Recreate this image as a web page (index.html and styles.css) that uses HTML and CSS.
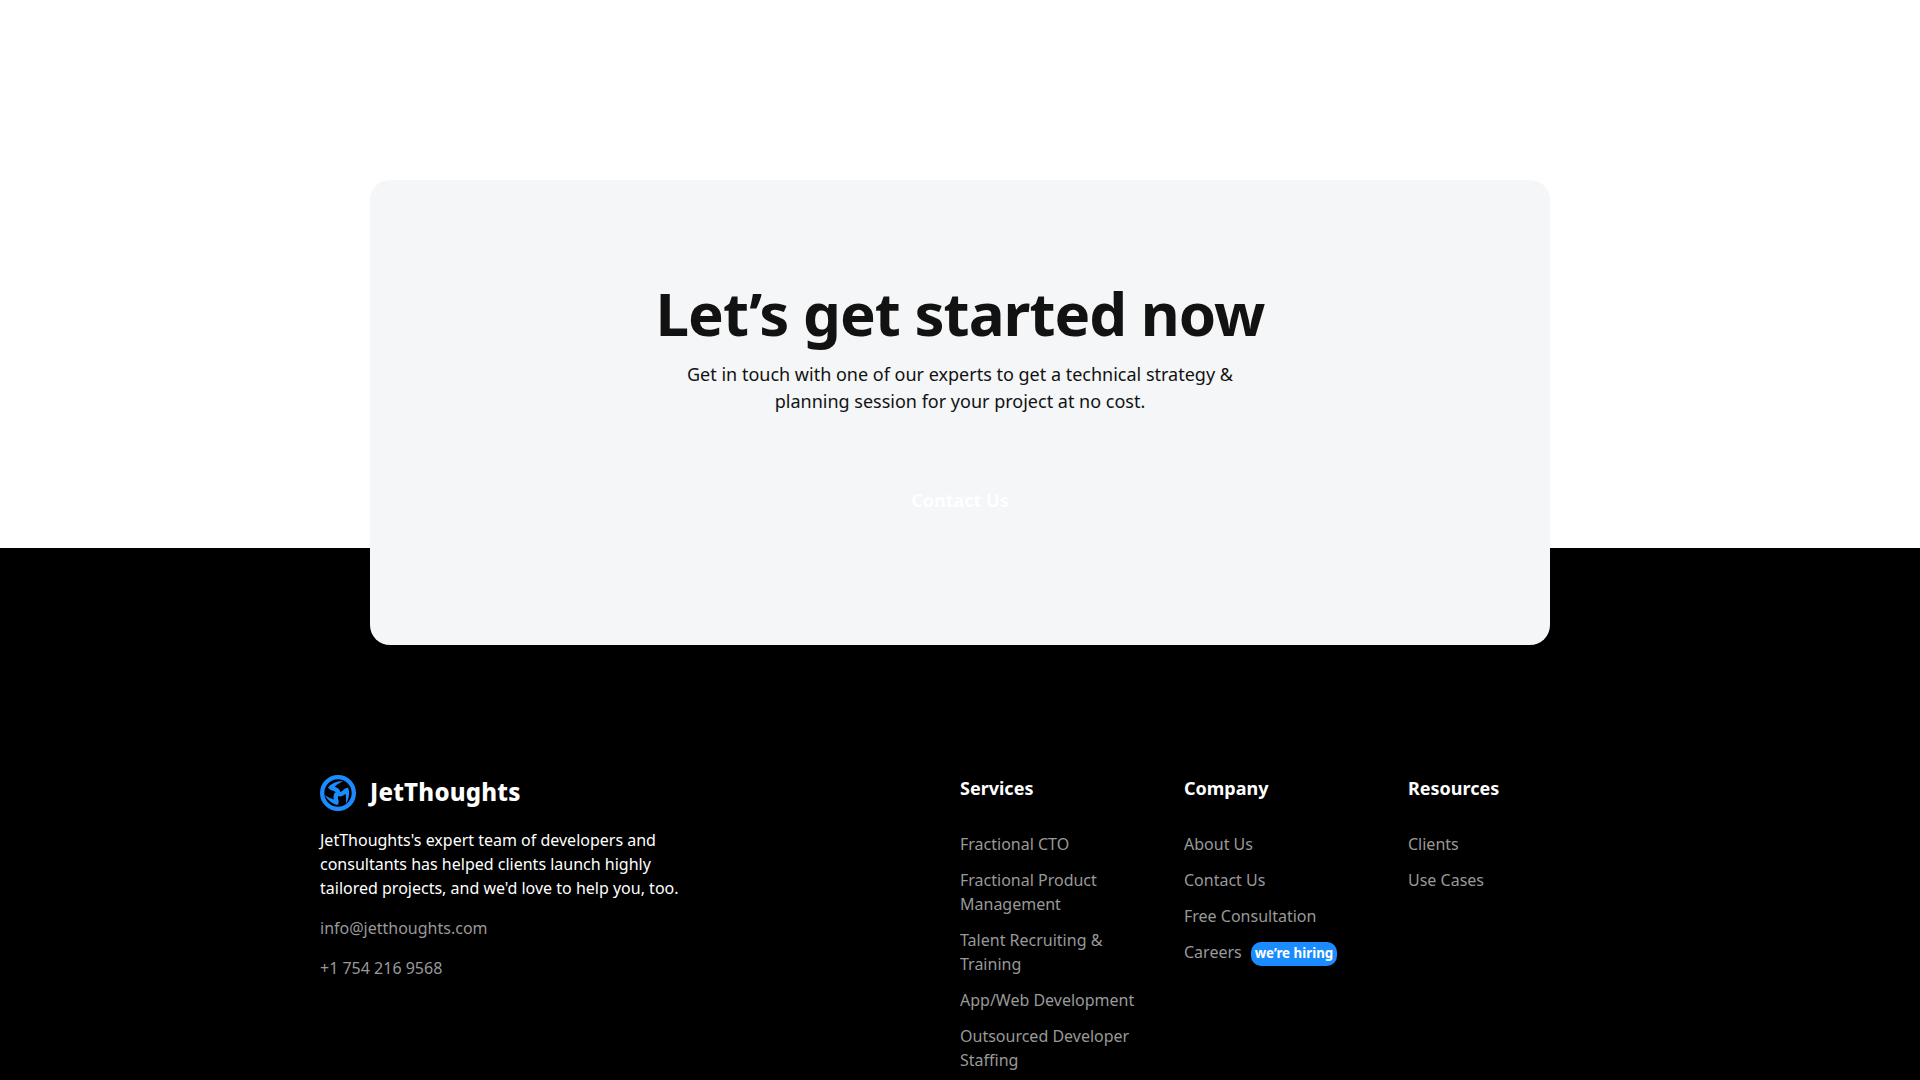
FILE: index.html
```html
<!DOCTYPE html>
<html lang="en">
<head>
<meta charset="utf-8">
<title>JetThoughts</title>
<link rel="stylesheet" href="styles.css">
</head>
<body>
<section class="cta">
  <div class="cta-card">
    <h2 class="cta-title">Let’s get started now</h2>
    <p class="cta-text">Get in touch with one of our experts to get a technical strategy &amp; planning session for your project at no cost.</p>
    <a class="cta-button">Contact Us</a>
  </div>
</section>
<footer class="footer">
  <div class="footer-inner">
    <div class="about">
      <div class="logo">
        <svg class="logo-mark" viewBox="0 0 108 108">
          <circle cx="54" cy="54" r="47.5" fill="none" stroke="#1a8cff" stroke-width="13"/>
          <g fill="#1a8cff">
            <path id="arm" d="M54 57 L48 58 C50 52 45 48 32 45 L24 38 C32 26 48 19 69 18 C60 24 51 28 44 35 C56 39 62 45 60 54 Z"/>
            <use href="#arm" transform="rotate(120 54 55)"/>
            <use href="#arm" transform="rotate(240 54 55)"/>
          </g>
        </svg>
        <span class="logo-name">JetThoughts</span>
      </div>
      <p class="about-text">JetThoughts's expert team of developers and consultants has helped clients launch highly tailored projects, and we'd love to help you, too.</p>
      <a class="contact">info@jetthoughts.com</a>
      <a class="contact">+1 754 216 9568</a>
    </div>
    <nav class="columns">
      <div class="column">
        <h3 class="column-title">Services</h3>
        <ul class="links">
          <li>Fractional CTO</li>
          <li>Fractional Product Management</li>
          <li>Talent Recruiting &amp; Training</li>
          <li>App/Web Development</li>
          <li>Outsourced Developer Staffing</li>
        </ul>
      </div>
      <div class="column">
        <h3 class="column-title">Company</h3>
        <ul class="links">
          <li>About Us</li>
          <li>Contact Us</li>
          <li>Free Consultation</li>
          <li class="careers">Careers <span class="badge">we’re hiring</span></li>
        </ul>
      </div>
      <div class="column">
        <h3 class="column-title">Resources</h3>
        <ul class="links">
          <li>Clients</li>
          <li>Use Cases</li>
        </ul>
      </div>
    </nav>
  </div>
</footer>
</body>
</html>
```

FILE: styles.css
```css
* { box-sizing: border-box; }
body {
  margin: 0;
  height: 1080px;
  overflow: hidden;
  background: #fff;
  color: #121212;
  font: 16px/24px "Noto Sans", sans-serif;
}
h2, h3, p, ul { margin: 0; padding: 0; }
.cta {
  display: flex;
  justify-content: center;
  padding-top: 180px;
  background: linear-gradient(#fff 548px, #000 548px);
}
.cta-card {
  display: flex;
  flex-direction: column;
  align-items: center;
  width: 1180px;
  height: 465px;
  padding-top: 97px;
  border-radius: 20px;
  background: #f4f6f8;
  text-align: center;
}
.cta-title {
  font-size: 60px;
  line-height: 72px;
  font-weight: 700;
  letter-spacing: -1px;
}
.cta-text {
  width: 580px;
  margin-top: 12px;
  font-size: 18px;
  line-height: 27px;
}
.cta-button {
  margin-top: 72px;
  color: #fff;
  font-size: 18px;
  line-height: 27px;
  font-weight: 700;
}
.footer {
  height: 435px;
  padding-top: 130px;
  background: #000;
  color: #fff;
}
.footer-inner {
  display: flex;
  justify-content: space-between;
  width: 1280px;
  margin: 0 auto;
}
.about {
  display: flex;
  flex-direction: column;
  width: 370px;
}
.logo {
  display: flex;
  align-items: center;
  gap: 14px;
  height: 36px;
}
.logo-mark { width: 36px; height: 36px; }
.logo-name {
  margin-bottom: 2px;
  font-size: 24px;
  line-height: 34px;
  font-weight: 800;
  letter-spacing: 0.22px;
}
.about-text { margin-top: 17px; }
.contact { margin-top: 16px; color: #999; }
.columns {
  display: grid;
  grid-template-columns: repeat(3, 176px);
  gap: 48px;
  width: 640px;
}
.column-title {
  font-size: 18px;
  line-height: 27px;
  font-weight: 700;
}
.links {
  display: flex;
  flex-direction: column;
  gap: 12px;
  margin-top: 30px;
  color: #999;
  list-style: none;
}
.careers { display: flex; gap: 9px; height: 24px; }
.badge {
  height: 24px;
  margin-top: 2px;
  padding: 0 4px;
  border-radius: 10px;
  background: #1a8cff;
  color: #fff;
  font-size: 13.33px;
  line-height: 22px;
  font-weight: 700;
}
```
